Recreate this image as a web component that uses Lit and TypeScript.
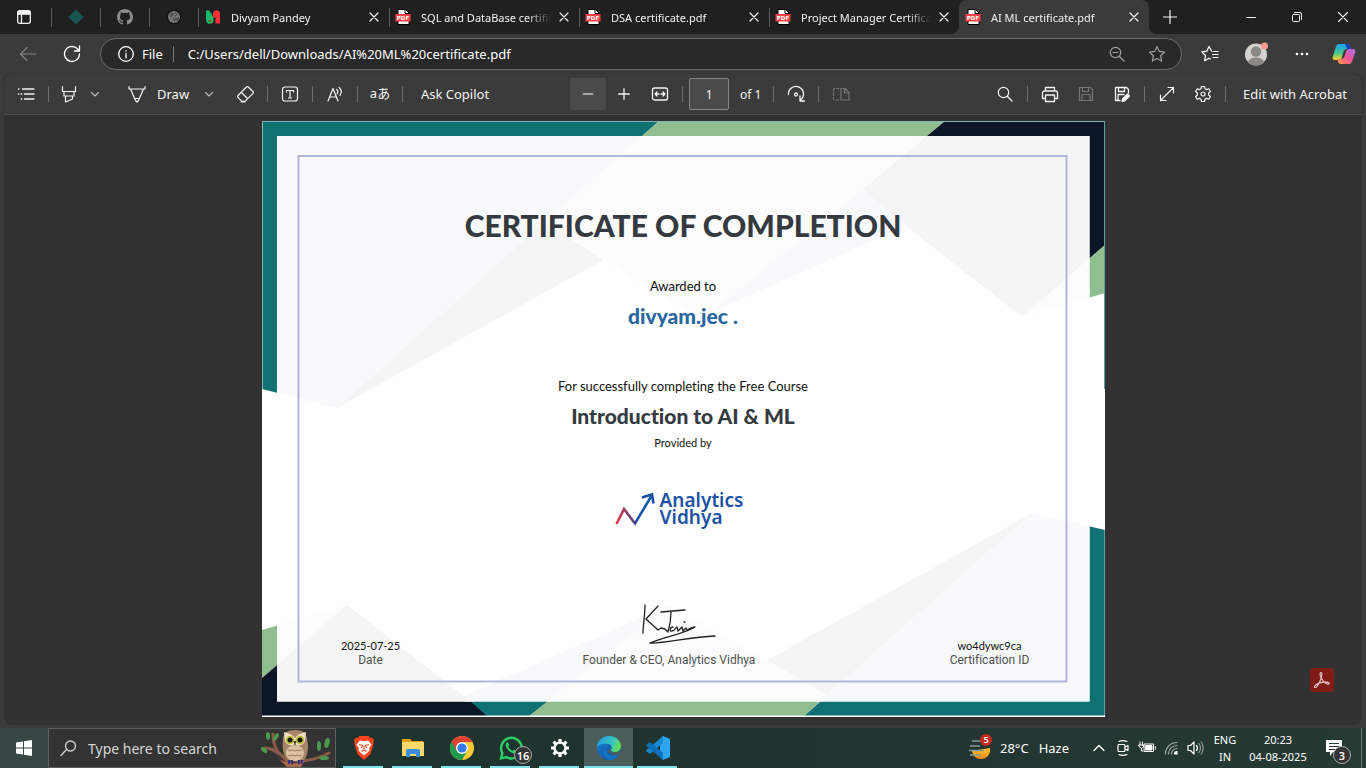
import { LitElement, html, css, svg, TemplateResult } from "lit";
import { customElement } from "lit/decorators.js";
import { classMap } from "lit/directives/class-map.js";

const base = css`
  * { box-sizing: border-box; }
  button, input { font: inherit; color: inherit; background: none; border: 0; padding: 0; margin: 0; outline: none; }
  button, a { display: flex; align-items: center; justify-content: center; flex: none; color: inherit; text-decoration: none; white-space: nowrap; }
  svg { display: block; flex: none; }
`;

/** Line icon on a square grid one unit per pixel. */
const line = (size: number, body: TemplateResult, width = 1.2) => html`<svg width=${size} height=${size} viewBox="0 0 ${size} ${size}" fill="none" stroke="currentColor" stroke-width=${width} stroke-linecap="round" stroke-linejoin="round" aria-hidden="true">${body}</svg>`;

const art = (w: number, h: number, body: TemplateResult) => html`<svg width=${w} height=${h} viewBox="0 0 ${w} ${h}" aria-hidden="true">${body}</svg>`;

const closeIcon = line(10, svg`<path d="M1 1l8 8M9 1l-8 8"/>`, 1.2);
const chevron = line(10, svg`<path d="M1.500 3.500L5 7l3.500-3.500"/>`, 1.1);

const pdfIcon = art(16, 16, svg`
  <path d="M3 .5h7.500L14 4v11.500H3z" fill="#fff" stroke="#000"/>
  <path d="M10 1v3.500h4" fill="none" stroke="#000"/>
  <rect x=".5" y="5" width="15" height="7.500" fill="#f8413f"/>
  <text x="8" y="11" text-anchor="middle" font-family="DejaVu Sans, sans-serif" font-weight="700" font-size="5.500" fill="#fff">PDF</text>`);

const teamIcon = art(16, 16, svg`
  <path d="M1 1.500h3.500l4 7v2.500a3.700 3.700 0 0 1-7.500 0z" fill="#12b866"/>
  <path d="M8 5c0-5 7-5 7 0v9.500h-4.500V8L8 9z" fill="#fb3137"/>
  <path d="M3 12.500l2-1.500 1 2" stroke="#a33" fill="none"/>`);

const TABS = [
  { title: "Divyam Pandey", icon: teamIcon, active: false },
  { title: "SQL and DataBase certificate.pdf", icon: pdfIcon, active: false },
  { title: "DSA certificate.pdf", icon: pdfIcon, active: false },
  { title: "Project Manager Certificate.pdf", icon: pdfIcon, active: false },
  { title: "AI ML certificate.pdf", icon: pdfIcon, active: true },
];

@customElement("tab-strip")
export class TabStrip extends LitElement {
  static styles = [base, css`
    :host { display: flex; height: 34px; background: #202020; color: #f2f2f2; font-size: 11px; }
    .menu { width: 51px; padding-right: 3px; }
    .pinned { width: 49px; border-left: 1px solid transparent; position: relative; }
    .pinned::before, .tab::before { content: ""; position: absolute; left: 0; top: 8px; height: 19px; width: 1px; background: #5c5c5c; }
    .pinned::before { left: -1px; }
    .tab { position: relative; display: flex; align-items: center; flex: 0 1 190px; min-width: 0; padding: 0 6px; }
    .pinned + .tab { margin-left: 1px; }
    .pinned + .tab::before { left: -1px; }
    .tab.active { background: #3b3b3b; border-radius: 8px 8px 0 0; }
    .tab.active::before { display: none; }
    .tab.active::after, .tab.active .foot { content: ""; position: absolute; right: -8px; bottom: 0; width: 8px; height: 8px; background: radial-gradient(circle at 100% 0, transparent 8px, #3b3b3b 8px); }
    .tab.active .foot { right: auto; left: -8px; background: radial-gradient(circle at 0 0, transparent 8px, #3b3b3b 8px); }
    .link { flex: 1; min-width: 0; gap: 10px; justify-content: flex-start; }
    .title { flex: 1; overflow: hidden; -webkit-mask-image: linear-gradient(90deg, #000 calc(100% - 24px), transparent); mask-image: linear-gradient(90deg, #000 calc(100% - 24px), transparent); }
    .close { width: 18px; height: 22px; margin-left: 4px; }
    .new { width: 42px; }
    .window { width: 46px; }
    .space { flex: 1; }
  `];
  render() {
    return html`
      <button class="menu" aria-label="Tab actions">${line(14, svg`<rect x=".7" y=".7" width="12.600" height="12.600" rx="2"/><path d="M1 2h12v2H1zM4.500 4v9" /><path d="M1.500 1.500h11v2h-11z" fill="currentColor"/>`, 1.3)}</button>
      <a class="pinned" href="#" aria-label="Pinned tab">${art(16, 16, svg`<path d="M8 .5L15.500 8 8 15.500.5 8z" fill="#1b5552"/>`)}</a>
      <a class="pinned" href="#" aria-label="GitHub">${art(16, 16, svg`<path fill="#8b8b8b" d="M8 0C3.580 0 0 3.580 0 8c0 3.540 2.290 6.530 5.470 7.590.4.070.55-.17.55-.38 0-.19-.01-.82-.01-1.490-2.010.37-2.530-.49-2.690-.94-.09-.23-.48-.94-.82-1.130-.28-.15-.68-.52-.01-.53.63-.01 1.080.58 1.230.82.72 1.210 1.870.87 2.330.66.070-.52.28-.87.51-1.070-1.780-.2-3.640-.89-3.640-3.950 0-.87.31-1.590.82-2.150-.08-.2-.36-1.020.08-2.120 0 0 .67-.21 2.200.82a7.600 7.600 0 0 1 4 0c1.530-1.040 2.200-.82 2.200-.82.44 1.100.16 1.920.08 2.120.51.56.82 1.270.82 2.150 0 3.070-1.870 3.750-3.650 3.950.29.25.54.73.54 1.480 0 1.070-.01 1.930-.01 2.200 0 .21.15.46.55.38A8 8 0 0 0 16 8c0-4.420-3.580-8-8-8z"/>`)}</a>
      <a class="pinned" href="#" aria-label="Pinned tab">${art(16, 16, svg`<circle cx="8" cy="8" r="7.500" fill="#151515"/><circle cx="8" cy="8" r="6" fill="#777"/><path d="M5 4.500v4M5 4.500c3-1 3 2.500 0 2M8.500 4c3 0 3 3 0 3M7 8.500l1.500 3.500L10 9l1.500 3 1-4" fill="none" stroke="#2a2a2a" stroke-width=".7"/>`)}</a>
      ${TABS.map((t) => html`<div class=${classMap({ tab: true, active: t.active })}>
        <i class="foot" ?hidden=${!t.active}></i>
        <a class="link" href="#">${t.icon}<span class="title">${t.title}</span></a>
        <button class="close" aria-label="Close tab">${closeIcon}</button>
      </div>`)}
      <button class="new" aria-label="New tab">${line(14, svg`<path d="M7 .5v13M.5 7h13"/>`)}</button>
      <span class="space"></span>
      <button class="window" aria-label="Minimise">${line(10, svg`<path d="M.5 5.500h9"/>`, 1)}</button>
      <button class="window" aria-label="Restore">${line(10, svg`<rect x=".5" y="2.500" width="7" height="7" rx="1"/><path d="M2.500.5H8A1.500 1.500 0 0 1 9.500 2v5.500"/>`, 1)}</button>
      <button class="window" aria-label="Close">${line(10, svg`<path d="M.5.5l9 9M9.500.5l-9 9"/>`, 1.1)}</button>`;
  }
}

@customElement("address-bar")
export class AddressBar extends LitElement {
  static styles = [base, css`
    :host { display: flex; align-items: center; height: 40px; padding: 0 3px 0 6px; background: #3b3b3b; color: #fff; font-size: 13px; }
    .nav { width: 44px; height: 32px; }
    .dim { color: #858585; }
    .box { flex: 1; display: flex; align-items: center; height: 32px; margin: 0 5px 0 6px; padding: 0 4px 0 17px; border: 1px solid #6b6b6b; border-radius: 16px; background: #292929; }
    .site { gap: 8px; }
    .rule { width: 1px; height: 16px; margin: 0 14px 0 10px; background: #777; }
    .url { flex: 1; min-width: 0; }
    .mini { width: 40px; color: #a0a0a0; }
    .tool { width: 46px; height: 32px; }
    .copilot { width: 38px; }
  `];
  render() {
    return html`
      <button class="nav dim" aria-label="Back">${line(18, svg`<path d="M17 9H1.500M8 2.500L1.500 9 8 15.500"/>`, 1.1)}</button>
      <button class="nav" aria-label="Refresh">${line(18, svg`<path d="M16.500 9A7.500 7.500 0 1 1 13.500 3L16 5.500M16.500 1v5h-5"/>`, 1.3)}</button>
      <div class="box">
        <button class="site">${line(16, svg`<circle cx="8" cy="8" r="7.300"/><path d="M8 7.500V12M8 4.700v.3"/>`, 1.3)}File</button>
        <span class="rule"></span>
        <input class="url" aria-label="Address" value="C:/Users/dell/Downloads/AI%20ML%20certificate.pdf" />
        <button class="mini" aria-label="Zoom">${line(16, svg`<circle cx="6.500" cy="6.500" r="5.200"/><path d="M4 6.500h5M10.500 10.500l4.500 4.500"/>`)}</button>
        <button class="mini" aria-label="Favourite">${line(18, svg`<path d="M9 1.500l2.300 4.900 5.200.7-3.800 3.700.9 5.300L9 13.500l-4.600 2.600.9-5.300-3.800-3.700 5.200-.7z"/>`)}</button>
      </div>
      <button class="tool" aria-label="Favourites">${line(18, svg`<path d="M10.500 6L8 1.500 5.800 6.200l-5 .7 3.700 3.600-.9 5.200L8 13.200l1.500.8M12 6.500h5M11.500 9.500H17M12 12.500h5"/>`, 1.2)}</button>
      <button class="tool" aria-label="Profile">${art(24, 24, svg`
        <defs><clipPath id="av"><circle cx="12" cy="12.500" r="11"/></clipPath></defs>
        <g clip-path="url(#av)"><rect width="24" height="24" fill="#d4d2ce"/><circle cx="12" cy="9.500" r="5.200" fill="#8b8984"/><ellipse cx="12" cy="20.500" rx="8" ry="5" fill="#8b8984"/></g>
        <circle cx="20.500" cy="4" r="3.500" fill="#fa9a90"/>`)}</button>
      <button class="tool" aria-label="Settings and more">${art(14, 4, svg`<g fill="#fff"><circle cx="2" cy="2" r="1.300"/><circle cx="7" cy="2" r="1.300"/><circle cx="12" cy="2" r="1.300"/></g>`)}</button>
      <button class="copilot" aria-label="Copilot">${art(24, 22, svg`
        <defs>
          <linearGradient id="ca" x1="0" y1="0" x2="0" y2="1"><stop offset="0" stop-color="#1aa5f5"/><stop offset=".55" stop-color="#43c58f"/><stop offset="1" stop-color="#f7d323"/></linearGradient>
          <linearGradient id="cb" x1="1" y1="0" x2="0" y2="1"><stop offset="0" stop-color="#a86cf0"/><stop offset=".5" stop-color="#f0559a"/><stop offset="1" stop-color="#fd9a3c"/></linearGradient>
        </defs>
        <path d="M7 1h8.500c1.500 0 2 1 2.500 2.500l.8 2.500H15c-2 0-3 1-3.600 3L9.500 15.500c-.5 1-1.200 1.500-2.500 1.500H3C.8 17 .2 15.500.8 13.500L4 3.500C4.600 1.800 5.500 1 7 1z" fill="url(#ca)"/>
        <path d="M13 1h2.500c1.500 0 2 1 2.500 2.500l.8 2.500H15z" fill="#1544c0"/>
        <path d="M17 21H8.500C7 21 6.500 20 6 18.500L5.300 16H9c2 0 3-1 3.600-3l1.900-5.500c.5-1 1.200-1.500 2.500-1.500h4c2.200 0 2.800 1.500 2.200 3.500L20 18.500c-.6 1.700-1.500 2.500-3 2.500z" fill="url(#cb)"/>`)}</button>`;
  }
}

@customElement("pdf-toolbar")
export class PdfToolbar extends LitElement {
  static styles = [base, css`
    :host { display: flex; align-items: center; height: 41px; padding: 0 2px 0 4px; border-bottom: 1px solid #4c4c4c; border-radius: 8px 8px 0 0; background: #3b3b3b; color: #f4f4f4; font-size: 13px; box-shadow: 0 0 2px #2a2a2a; }
    .tool { width: 36px; height: 32px; }
    .marker { width: 32px; height: 32px; }
    .more { width: 20px; height: 32px; color: #bdbdbd; }
    .draw { width: 80px; height: 32px; margin-left: 14px; padding-left: 9px; gap: 11px; justify-content: flex-start; }
    .erase { margin-left: 8px; }
    .ask { width: 96px; height: 32px; }
    .edit { width: 130px; height: 32px; }
    .rule { flex: none; width: 1px; height: 16px; margin: 0 4px; background: #6e6e6e; }
    .off { color: #757575; }
    .out { background: #4a4a4a; color: #a8a8a8; border-radius: 2px; }
    .gap { flex: 10; }
    .wide { flex: 19; }
    .page { width: 40px; height: 32px; margin: 0 11px 0 2px; border: 1px solid #858585; border-radius: 2px; background: #4a4a4a; text-align: center; font-size: 12px; }
    .count { margin-right: 8px; font-size: 12px; white-space: nowrap; }
    .kana { font-size: 13px; line-height: 18px; font-family: "Noto Sans", "Noto Sans CJK JP", sans-serif; padding-bottom: 2px; }
  `];
  render() {
    const rule = html`<span class="rule"></span>`;
    return html`
      <button class="tool" aria-label="Contents">${line(18, svg`<path d="M5.500 4H17M7.500 9H17M7.500 14H17M1.500 4h.5M1.500 9h.5M4.200 9h.5M4.200 14h.5" />`, 1.3)}</button>
      ${rule}
      <button class="marker" aria-label="Highlight">${line(18, svg`<path d="M2.500 1.500v5h13v-5M4 6.500v4.500h10V6.500M5.500 11v6l7-3v-3"/>`)}</button>
      <button class="more" aria-label="Highlight colours">${chevron}</button>
      <button class="draw">${line(18, svg`<path d="M1 1.500v2.500h16V1.500M2.500 4l5 11.500L9 17l1.500-1.500L15.500 4M7 13.500h4"/>`)}Draw</button>
      <button class="more" aria-label="Pen options">${chevron}</button>
      <button class="tool erase" aria-label="Erase">${line(18, svg`<path d="M10.500 2L2 10.500c-.6.6-.6 1.200 0 1.800l4 4h3L17 8.300c.5-.6.5-1.200 0-1.800L12.300 2c-.6-.5-1.200-.5-1.800 0zM5.500 7.500l6 6M5 17h4"/>`)}</button>
      ${rule}
      <button class="tool" aria-label="Add text">${line(18, svg`<rect x="1.500" y="2" width="15" height="14" rx="2.500"/><path d="M5.500 7V5.500h7V7M9 5.500v7.500M7.500 13h3"/>`)}</button>
      ${rule}
      <button class="tool" aria-label="Read aloud">${line(18, svg`<path d="M2 16L7 3.500 12 16M3.700 12h6.600M10.500 4.500c1.500 1 1.500 3 .5 4.500M13 2.500c2.700 2 2.700 5 1 8"/>`)}</button>
      ${rule}
      <button class="tool kana" aria-label="Translate">aあ</button>
      ${rule}
      <button class="ask">Ask Copilot</button>
      <span class="gap"></span>
      <button class="tool out" aria-label="Zoom out">${line(12, svg`<path d="M1.500 6h9"/>`, 2)}</button>
      <button class="tool" aria-label="Zoom in">${line(12, svg`<path d="M.7 6h10.600M6 .7v10.600"/>`, 1.3)}</button>
      <button class="tool" aria-label="Fit to width">${line(18, svg`<rect x="1.500" y="3" width="15" height="12" rx="2"/><path d="M8 9H4.500M6 7L4 9l2 2M10 9h3.500M12 7l2 2-2 2"/>`, 1.3)}</button>
      ${rule}
      <input class="page" aria-label="Page number" value="1" />
      <span class="count">of 1</span>
      ${rule}
      <button class="tool" aria-label="Rotate">${line(18, svg`<path d="M1.500 9.500a7.500 7.500 0 1 1 12 5.500M13 11v5h4.500"/><circle cx="9" cy="9.500" r="1.500"/>`, 1.3)}</button>
      ${rule}
      <button class="tool off" aria-label="Page view">${line(18, svg`<path d="M7 3.500H3a1.500 1.500 0 0 0-1.500 1.500v9A1.500 1.500 0 0 0 3 15h4" stroke-dasharray="2.500 2"/><path d="M9 3.500h4l4 4V15H9zM12.500 3.500V8H17"/>`)}</button>
      <span class="wide"></span>
      <button class="tool" aria-label="Find">${line(16, svg`<circle cx="6.500" cy="6.500" r="5.200"/><path d="M10.500 10.500l4.500 4.500"/>`)}</button>
      ${rule}
      <button class="tool" aria-label="Print">${line(18, svg`<path d="M4 13.500H1.500V8A2 2 0 0 1 3.500 6h11a2 2 0 0 1 2 2v5.500H14M4.500 6V2.500h9V6M4.500 10h9v6.500h-9z"/>`, 1.3)}</button>
      <button class="tool off" aria-label="Save">${line(16, svg`<path d="M1.500 1.500h11l2 2v11h-13zM4.500 1.500v4h6v-4M4 14.500v-6h8v6"/>`)}</button>
      <button class="tool" aria-label="Save as">${line(16, svg`<path d="M6 14.500H1.500v-13h11l2 2V7M4.500 1.500v4h6v-4M4 14.500v-6h6"/><path d="M8 15.500l.7-2.700L13.500 8l2 2-4.800 4.800z" fill="currentColor"/>`, 1.3)}</button>
      ${rule}
      <button class="tool" aria-label="Full screen">${line(16, svg`<path d="M1.500 14.500l13-13M9 1.500h5.500V7M1.500 9v5.500H7"/>`)}</button>
      <button class="tool" aria-label="Settings">${line(18, svg`<path d="M7.500 1.500h3l.5 2.300 1.500.8 2.300-.8 1.600 2.700-1.800 1.500v2l1.800 1.500-1.600 2.700-2.300-.8-1.500.8-.5 2.300h-3L7 14.200l-1.500-.8-2.300.8-1.600-2.700L3.400 10V8L1.600 6.500l1.600-2.700 2.300.8L7 3.800z"/><circle cx="9" cy="9" r="2"/>`)}</button>
      ${rule}
      <button class="edit">Edit with Acrobat</button>`;
  }
}

/* Facets of the certificate: outline, frame colour, tint inside the frame. */
const FACETS: [string, string, string][] = [
  ["0,0 397,0 75,287 0,268", "#107172", "#f7f9fb"],
  ["75,287 283,101 341,139", "#fff", "#f5f5f5"],
  ["397,0 683,0 448,192 433,196 283,101", "#8fbe90", "#fcfcfc"],
  ["601,68 643,104 615,118 448,192", "#fff", "#f7f9fb"],
  ["683,0 843,0 843,124 760,196 643,104 601,68", "#0d1626", "#f5f5f5"],
  ["843,124 843,172 760,196", "#8fbe90", "#fcfcfc"],
  ["0,509 85,484 0,557", "#8fbe90", "#fcfcfc"],
  ["195,570 201,575 408,484 266,596 215,596", "#107172", "#f7f9fb"],
  ["0,557 85,484 208,580 226,596 0,596", "#0d1626", "#f5f5f5"],
  ["266,596 408,484 565,574 541,596", "#8fbe90", "#fcfcfc"],
  ["505,539 770,392 565,574", "#fff", "#f5f5f5"],
  ["541,596 770,392 843,409 843,596", "#107172", "#f7f9fb"],
];

@customElement("certificate-page")
export class CertificatePage extends LitElement {
  static styles = [base, css`
    :host { position: relative; display: flex; flex-direction: column; align-items: center; height: 100%; aspect-ratio: 843 / 596; padding-top: 84px; background: #fff; color: #111; font-family: Lato, sans-serif; font-size: 13px; font-variant-ligatures: none; text-align: center; }
    .paper { position: absolute; inset: 0; width: 100%; height: 100%; }
    h1, h2, h3, p { position: relative; margin: 0; }
    h1, h2, h3 { font-family: "Lato Black", Lato, sans-serif; font-weight: 900; color: #343a40; }
    h1 { font-size: 30px; line-height: 40px; }
    p { line-height: 20px; }
    h2 { margin-top: 6px; font-size: 21px; line-height: 28px; color: #2a66a0; }
    h3 { margin-top: 5px; font-size: 21px; line-height: 30px; }
    .awarded { margin-top: 31px; }
    .reason { margin-top: 46px; }
    .by { margin-top: 4px; font-size: 11px; line-height: 16px; }
    .brand { position: relative; display: flex; gap: 5px; margin-top: 41px; padding-right: 8px; text-align: left; font: 600 19px/17px "Noto Sans", sans-serif; color: #1b51a4; }
    .foot { position: relative; display: grid; grid-template-columns: 150px 1fr 150px; align-items: end; align-self: stretch; margin-top: auto; padding: 0 40px 50px 34px; font-size: 11px; line-height: 15px; }
    .cell { display: flex; flex-direction: column; align-items: center; }
    .signed { padding-right: 22px; }
    .sign { margin: 0 0 7px 20px; }
    .label { font-family: Roboto, sans-serif; font-size: 12px; line-height: 14px; color: #505050; }
  `];
  render() {
    return html`
      <svg class="paper" viewBox="0 0 843 596" preserveAspectRatio="none" aria-hidden="true">
        <defs><clipPath id="inner"><rect x="15" y="15" width="812.500" height="565.500"/></clipPath></defs>
        ${FACETS.map(([points, frame]) => svg`<polygon points=${points} fill=${frame}/>`)}
        <g clip-path="url(#inner)">
          <rect width="843" height="596" fill="#fff"/>
          ${FACETS.map(([points, , tint]) => svg`<polygon points=${points} fill=${tint}/>`)}
        </g>
        <path d="M0 .5h843M.5 0v268" stroke="#7fb5b8" fill="none"/>
        <path d="M842.500 0v268M842.500 409v187" stroke="#58a3a6"/>
        <path d="M0 595.300h843" stroke="#fff" stroke-width="1.400"/>
        <rect x="36.500" y="35" width="768" height="525.500" fill="none" stroke="#b2b5dc" stroke-width="2"/>
      </svg>
      <h1>CERTIFICATE OF COMPLETION</h1>
      <p class="awarded">Awarded to</p>
      <h2>divyam.jec .</h2>
      <p class="reason">For successfully completing the Free Course</p>
      <h3>Introduction to AI &amp; ML</h3>
      <p class="by">Provided by</p>
      <div class="brand">
        <svg width="40" height="36" viewBox="0 0 40 36" fill="none" aria-hidden="true">
          <defs><linearGradient id="av" x1="0" x2="1"><stop offset="0" stop-color="#e8383f"/><stop offset=".5" stop-color="#4a4285"/><stop offset=".6" stop-color="#1557a8"/></linearGradient></defs>
          <path d="M1.500 32L9 17l11 14.500L37 3" stroke="url(#av)" stroke-width="2.600"/><path d="M27 5.500L37 2.500l1.500 9" stroke="#1350a5" stroke-width="2.600"/>
        </svg>
        <span>Analytics<br />Vidhya</span>
      </div>
      <div class="foot">
        <div class="cell"><span>2025-07-25</span><span class="label">Date</span></div>
        <div class="cell signed">
          <svg class="sign" width="76" height="42" viewBox="0 0 76 42" fill="none" stroke="#222" stroke-width="1.300" stroke-linecap="round" stroke-linejoin="round" aria-hidden="true">
            <path d="M4 1C4 11 2 22 2 29M17 2L5 15c4 4 8 7 12 11l3-2 4 1 3 3c2-7 3-13 3-20M20 8l24-2M32 23c-3 0-4 5-1 4 3 0 4-4 5-4l1 4 4-4 1 4 3-3 1 2 4-2 4-1M43 18h1M54 23c-8 6-28 9-45 16 12 1 40-6 65-7"/>
          </svg>
          <span class="label">Founder &amp; CEO, Analytics Vidhya</span>
        </div>
        <div class="cell"><span>wo4dywc9ca</span><span class="label">Certification ID</span></div>
      </div>`;
  }
}

const owl = art(72, 38, svg`
  <path d="M68 24c-9 5-17 7-27 8-10 0-16-2-21-6-6-4-9-7-16-7M20 26C14 21 12 13 12 5M22 28l10 10" stroke="#8a5a48" stroke-width="3" fill="none" stroke-linecap="round"/>
  <path d="M18 30c8 5 18 5 26 2l-4 6H26z" fill="#a8674b"/>
  <g fill="#4c9a4b"><ellipse cx="7" cy="7" rx="2" ry="4"/><ellipse cx="15" cy="8" rx="2" ry="4" transform="rotate(30 15 8)"/><ellipse cx="3" cy="21" rx="2" ry="4" transform="rotate(-50 3 21)"/><ellipse cx="58" cy="17" rx="2" ry="5"/><ellipse cx="66" cy="14" rx="2.500" ry="5" transform="rotate(15 66 14)"/><ellipse cx="63" cy="29" rx="5" ry="2"/></g>
  <path d="M22 11c0-6 3-10 12-10s12 4 12 10c2 5 1 16-3 20H27c-5-4-6-14-5-20z" fill="#a88468"/>
  <ellipse cx="34" cy="24" rx="9" ry="8" fill="#dcc3a0"/><path d="M27 21q2 2 4 0 3 2 5 0 3 2 5 0M27 26q2 2 4 0 3 2 5 0 3 2 5 0" stroke="#9a7558" fill="none"/>
  <path d="M23 3c5 1 9 3 11 6 2-3 6-5 11-6l-1 9c-2 5-7 5-10 3-3 2-8 2-10-3z" fill="#f1e2c3"/>
  <circle cx="29" cy="11" r="4.300" fill="#bcc13a"/><circle cx="39" cy="11" r="4.300" fill="#bcc13a"/><circle cx="29" cy="11" r="2.500" fill="#161616"/><circle cx="39" cy="11" r="2.500" fill="#161616"/><path d="M32.500 12h3L34 17z" fill="#4b3b35"/>
  <path d="M28 31v4M31 31v4M38 31v4M41 31v4" stroke="#30308c" stroke-width="2"/>`);

const APPS: { name: string; icon: TemplateResult; badge?: string; active?: boolean }[] = [
  { name: "Brave", icon: art(24, 24, svg`<path d="M7.500 0h9l2 2 2-.3 1.500 3-.7 2 .2 1.300-3 10L12 24l-6.500-6-3-10 .2-1.300-.7-2 1.500-3 2 .3z" fill="#f9431f"/><path d="M8 4.500l4 .8 4-.8 3.500 4-2.500 4 .5 2-2.500 2.500-3 2.500-3-2.500-2.500-2.500.5-2-2.500-4z" fill="#fff"/><path d="M7 8.500l3.500.8-1 2.700M17 8.500l-3.500.8 1 2.700M9.500 15.500l2.500-1.500 2.500 1.500M12 10v4" stroke="#f9431f" fill="none" stroke-width="1.100"/>`) },
  { name: "File Explorer", icon: art(24, 24, svg`<path d="M1 3h8l2 2h11v4H1z" fill="#e2a011"/><path d="M1 6h22v14H1z" fill="#fbd86c"/><path d="M5 21v-6a2 2 0 0 1 2-2h10a2 2 0 0 1 2 2v6h-4v-3H9v3z" fill="#3a8fdc"/>`) },
  { name: "Chrome", icon: art(24, 24, svg`<circle cx="12" cy="12" r="12" fill="#fcc934"/><path d="M12 12L1.600 6A12 12 0 0 0 12 24l5.200-9z" fill="#1e9a4c"/><path d="M1.600 6a12 12 0 0 1 20.800 0H12l-5.200 9z" fill="#df4031"/><circle cx="12" cy="12" r="6" fill="#fff"/><circle cx="12" cy="12" r="4.600" fill="#347be8"/>`) },
  { name: "WhatsApp", badge: "16", icon: art(24, 24, svg`<path d="M2 22.300l1.400-5.200A10.300 10.300 0 1 1 7.200 21z" fill="none" stroke="#27cf65" stroke-width="2.400"/><path d="M8.500 6c-2 1-2.200 3-1.200 5 1.600 3.400 4 5.500 7 6.500 2 .5 3.500-.6 3.700-2.500l-3-1.600-1.400 1.500c-2-1-3.400-2.300-4.300-4.300l1-1.500z" fill="#27cf65"/>`) },
  { name: "Settings", icon: art(24, 24, svg`<circle cx="12" cy="12" r="5.500" fill="none" stroke="#fff" stroke-width="2.500"/><path d="M12 3v3M12 18v3M3 12h3M18 12h3M5.600 5.600l2.200 2.200M16.200 16.200l2.200 2.200M5.600 18.400l2.200-2.200M16.200 7.800l2.200-2.200" stroke="#fff" stroke-width="3.200"/>`) },
  { name: "Edge", active: true, icon: art(24, 24, svg`
    <defs><linearGradient id="e1" x1="0" y1=".2" x2="1" y2=".5"><stop offset="0" stop-color="#279bdd"/><stop offset=".6" stop-color="#35c3c6"/><stop offset="1" stop-color="#62dd55"/></linearGradient><linearGradient id="e2" x1="0" y1="0" x2="1" y2="1"><stop offset="0" stop-color="#1781cf"/><stop offset="1" stop-color="#114b94"/></linearGradient></defs>
    <circle cx="12" cy="12" r="12" fill="url(#e2)"/>
    <path d="M0 12C0 5 5 0 12 0s12 5 12 10c0 4-3 6-6 6-3 0-4.500-1-4-2 1.500-2 1-5-2.500-6C7 7 1 8 0 12z" fill="url(#e1)"/>
    <path d="M9 13c-1 5 5 8 13 5-2 3-5 6-9.500 6C5 22 6 14 9 13z" fill="#1672c4"/><path d="M14 13.500c-1 2 1 3.500 10 1.500v2.500c-6 3-13 .5-13-4z" fill="#4c5e5a"/>`) },
  { name: "Visual Studio Code", icon: art(24, 24, svg`<path d="M17 0l7 3v18l-7 3-3-3V3z" fill="#2aa5f2"/><path d="M17 0v7L4 18l-3.500-2.500v-1.500z" fill="#1a87d2"/><path d="M17 24v-7L4 6 .5 8.500V10z" fill="#0d70b8"/>`) },
];

@customElement("task-bar")
export class TaskBar extends LitElement {
  static styles = [base, css`
    :host { display: flex; height: 40px; background: linear-gradient(90deg, #20362f, #20332f 50%, #263a34); color: #fff; font-size: 13px; }
    .start { width: 48px; background: #384945; }
    .search { flex: 0 1 288px; min-width: 0; display: flex; align-items: center; padding: 0 2px 0 11px; border: 1px solid #5f6060; background: #333; color: #d2d2d2; font-size: 14px; }
    .query { flex: 1; min-width: 0; margin-left: 11px; }
    .query::placeholder { color: #d6d6d6; opacity: 1; }
    .apps { display: flex; margin-left: 3px; }
    .app { position: relative; width: 49px; }
    .app::after { content: ""; position: absolute; left: 4px; right: 5px; bottom: 0; height: 2px; background: #7ee4e8; }
    .active { background: #4c5e5a; }
    .active::after { left: 0; right: 0; }
    .badge { position: absolute; display: flex; align-items: center; justify-content: center; width: 18px; height: 18px; left: 28px; top: 18px; border: 1px solid #aaa; border-radius: 9px; background: #333; font-size: 11px; font-weight: 600; }
    .tray { display: flex; margin-left: auto; }
    .weather { gap: 8px; padding-right: 18px; }
    .weather b { font-weight: 400; margin-left: 2px; }
    .sky { position: relative; }
    .alert { position: absolute; left: 12px; top: -2px; width: 12px; height: 12px; border-radius: 6px; background: #c42b1c; font-size: 9px; line-height: 12px; font-weight: 600; text-align: center; }
    .item { width: 24px; }
    .stack { flex-direction: column; font-size: 11px; line-height: 17px; }
    .lang { width: 36px; }
    .clock { width: 70px; }
    .notes { width: 42px; position: relative; }
    .notes .badge { left: 20px; top: 18px; }
    .desktop { width: 5px; margin-left: 6px; border-left: 1px solid #6f7d79; }
  `];
  render() {
    return html`
      <button class="start" aria-label="Start">${art(16, 16, svg`<path d="M0 2.500L7 1.500V7.500H0zM8 1.300L16 0V7.500H8zM0 8.500h7v6L0 13.500zM8 8.500h8V16l-8-1.300z" fill="#fff"/>`)}</button>
      <label class="search">${line(17, svg`<circle cx="10.500" cy="6" r="5"/><path d="M6.500 9.500L1 15.500"/>`, 1.3)}<input class="query" aria-label="Search" placeholder="Type here to search" />${owl}</label>
      <div class="apps">${APPS.map((a) => html`<button class=${classMap({ app: true, active: !!a.active })} aria-label=${a.name}>${a.icon}${a.badge ? html`<span class="badge">${a.badge}</span>` : ""}</button>`)}</div>
      <div class="tray">
        <button class="weather"><span class="sky">${art(24, 24, svg`<defs><linearGradient id="sun" x1="0" y1="0" x2="0" y2="1"><stop offset="0" stop-color="#fbc02d"/><stop offset="1" stop-color="#f08a18"/></linearGradient></defs><path d="M4 15l18-3c1 6-3 11-9 11-5 0-8-3-9-8z" fill="url(#sun)"/><path d="M4 5h9M2 10h10M1 14.500h15M2 19h11" stroke="#8b989b" stroke-width="1.700"/>`)}<span class="alert">5</span></span><span>28°C</span><b>Haze</b></button>
        <button class="item" aria-label="Hidden icons">${line(12, svg`<path d="M1 8.500l5-5 5 5"/>`, 1.3)}</button>
        <button class="item" aria-label="Meet now">${line(16, svg`<rect x="3" y="4.500" width="7" height="7" rx="1"/><path d="M10 7l3-1.500v5L10 9M4 1.500c2.500-1 5.500-1 8 0M4 14.500c2.500 1 5.500 1 8 0"/>`, 1.2)}</button>
        <button class="item" aria-label="Battery">${line(18, svg`<path d="M2 3v3M4.500 3v3M1 6h4.500v2l-2 1.500L1.500 8zM3.500 9.500V12H5"/><path d="M6.500 5h9v7.500h-9z"/><path d="M8 6.500h6v4.500H8z" fill="currentColor"/><path d="M17.300 7.500v3"/>`, 1)}</button>
        <button class="item" aria-label="Network">${line(16, svg`<path d="M2.500 14C2.500 7.500 7.500 2.500 14 2.500M5.500 14c0-5 4-8.500 8.500-8.500M8.500 14c0-3 2.500-5.500 5.500-5.500" stroke="#a0aaa7"/><path d="M11.500 14c0-1.500 1-2.500 2.500-2.500V14z" fill="currentColor"/>`, 1.2)}</button>
        <button class="item" aria-label="Volume">${line(18, svg`<path d="M2 6.500h2.500L8 3v12l-3.500-3.500H2zM10.500 6.500c1.300 1.500 1.300 3.500 0 5"/><path d="M13 4.500c2 3 2 6 0 9M15.500 3c2.300 4 2.300 8 0 12" stroke="#8d9996"/>`, 1.2)}</button>
        <button class="stack lang"><span>ENG</span><span>IN</span></button>
        <button class="stack clock"><span>20:23</span><span>04-08-2025</span></button>
        <button class="notes" aria-label="Notifications">${art(18, 18, svg`<path d="M1 1h16v12H8l-3 4v-4H1z" fill="#fff"/><path d="M4 4.500h10M4 7.500h10M4 10.500h6" stroke="#253832"/>`)}<span class="badge">3</span></button>
        <button class="desktop" aria-label="Show desktop"></button>
      </div>`;
  }
}

@customElement("app-root")
export class AppRoot extends LitElement {
  static styles = [base, css`
    :host { display: flex; flex-direction: column; height: 100vh; background: #3b3b3b; font-family: "Noto Sans", sans-serif; overflow: hidden; }
    .viewer { flex: 1; min-height: 0; display: flex; flex-direction: column; margin: 0 4px 3px; border-radius: 8px; background: #323232; }
    .sheet { position: relative; flex: 1; min-height: 0; display: flex; justify-content: center; padding: 6px 0 8px; }
    .acrobat { position: absolute; right: 28px; bottom: 33px; width: 24px; height: 24px; border-radius: 3px; background: #811b16; }
  `];
  render() {
    return html`
      <tab-strip></tab-strip>
      <address-bar></address-bar>
      <main class="viewer">
        <pdf-toolbar></pdf-toolbar>
        <div class="sheet">
          <certificate-page></certificate-page>
          <button class="acrobat" aria-label="Open in Acrobat">${line(18, svg`<path d="M8 1.500c-1.500 0-1 3 0 5 1.300 2.800 3 5 5.500 6.300 2 1 3.500 0 2.500-1-1.500-1.500-8-.5-11 .8-3 1.400-4.500 3.400-3 3.900 1.500.3 4-4 5.500-7.500C8.700 6 9.500 1.500 8 1.500z" stroke="#ddc3c2"/>`, 1.2)}</button>
        </div>
      </main>
      <task-bar></task-bar>`;
  }
}
